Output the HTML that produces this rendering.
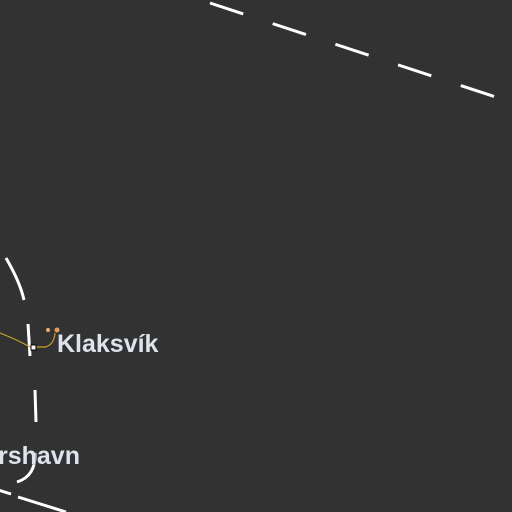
<!DOCTYPE html>
<html><head><style>
html,body{margin:0;padding:0;background:#323232;width:512px;height:512px;overflow:hidden}
svg{position:absolute;left:0;top:0}
.t{font-family:"Liberation Sans",sans-serif;font-weight:bold;font-size:25px;fill:#dfe3ea;stroke:#2a3040;stroke-width:0.6;paint-order:stroke}
</style></head><body>
<svg width="512" height="512" viewBox="0 0 512 512">
<g stroke="#fff" stroke-width="3" fill="none">
<path d="M210,3 L520,105" stroke-dasharray="35 31"/>
<path d="M6,258 Q20,282 24,300" />
<path d="M28,324 L30,356"/>
<path d="M35,390 L36,422"/>
<path d="M35,453 Q36,476 17,482"/>
<path d="M-2,490 L11,494"/>
<path d="M18,497 L66,512"/>
</g>
<path d="M0,333 Q18,340 30,347 L45,347 Q54,345 55,333" stroke="#c9a227" stroke-width="1.2" fill="none"/>
<circle cx="48" cy="330" r="2" fill="#e8b070"/>
<circle cx="57" cy="330" r="2.5" fill="#e89a50"/>
<rect x="31" y="345" width="5" height="5" fill="#fff" stroke="#000" stroke-width="1"/>
<text class="t" x="57" y="352">Klaksvík</text>
<text class="t" x="-2" y="464">rshavn</text>
</svg>
</body></html>
